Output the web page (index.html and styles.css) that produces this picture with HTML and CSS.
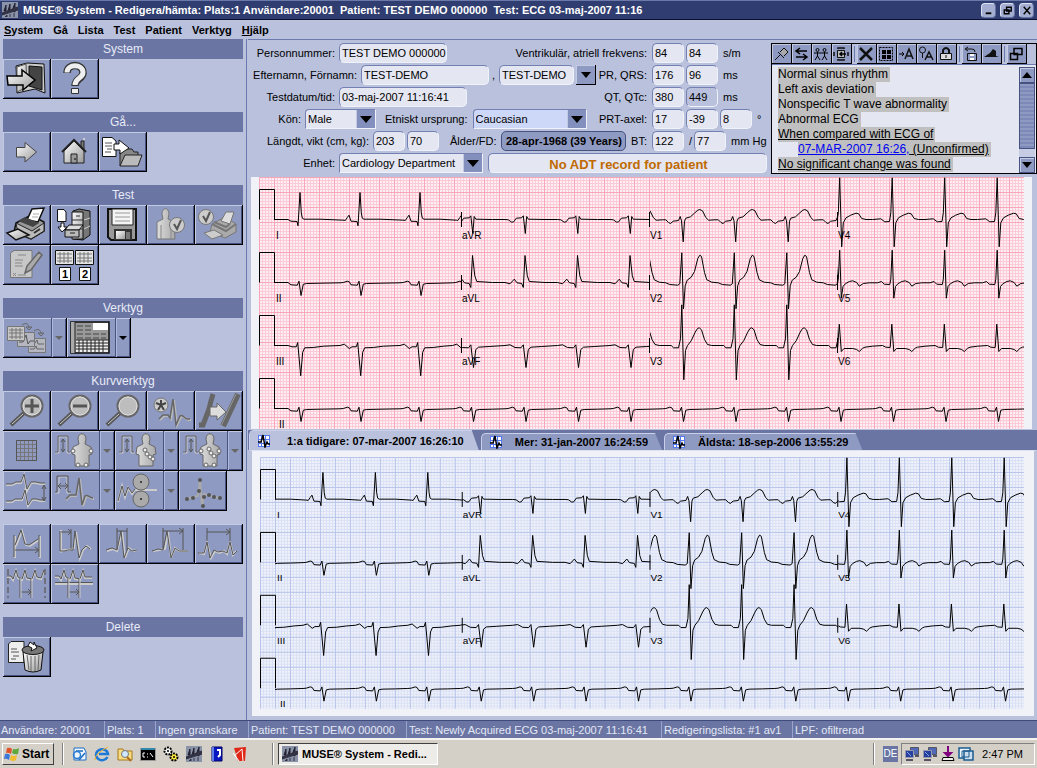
FILE: index.html
```html
<!DOCTYPE html>
<html lang="sv">
<head>
    <meta charset="UTF-8">
    <meta name="viewport" content="width=device-width, initial-scale=1.0">
    <title>MUSE® System</title>
    <link rel="stylesheet" href="styles.css">
</head>
<body>

<!-- Icon set -->
<svg class="defs" aria-hidden="true">
    <defs>
        <linearGradient id="metal" x1="0" y1="0" x2="1" y2="1">
            <stop offset="0" stop-color="#fff"/><stop offset="1" stop-color="#999"/>
        </linearGradient>
        <linearGradient id="dim" x1="0" y1="0" x2="1" y2="0">
            <stop offset="0" stop-color="#ddd"/><stop offset="1" stop-color="#aaa"/>
        </linearGradient>
        <pattern id="minor-pink" width="3" height="3" patternUnits="userSpaceOnUse"><path d="M.5 0V3M0 .5H3" stroke="#fccbd7" fill="none"/></pattern>
        <pattern id="major-pink" width="15" height="15" patternUnits="userSpaceOnUse"><path d="M.5 0V15M0 .5H15" stroke="#faa6ba" fill="none"/></pattern>
        <pattern id="minor-blue" width="3" height="3" patternUnits="userSpaceOnUse"><path d="M.5 0V3M0 .5H3" stroke="#dbe1f4" fill="none"/></pattern>
        <pattern id="major-blue" width="15" height="15" patternUnits="userSpaceOnUse"><path d="M.5 0V15M0 .5H15" stroke="#b8c5ea" fill="none"/></pattern>
    </defs>

    <symbol id="i-exit" viewBox="0 0 48 40">
        <path d="M13 7 24 4 41 5 42 34 32 30 14 34z" fill="#ccc" stroke="#111"/>
        <path d="M26 7 39 8V31L26 27z" fill="#444" stroke="#111"/>
        <path d="M14 8 23 5 24 28 14 33z" fill="url(#metal)" stroke="#555"/>
        <path d="M4 17H19V11L32 21 20 31V26H5z" fill="url(#metal)" stroke="#000" stroke-width="1.5"/>
    </symbol>
    <symbol id="i-help" viewBox="0 0 48 40">
        <path d="M16 14c0-10 16-10 16 0 0 6-8 5-8 13" fill="none" stroke="#333" stroke-width="7.500"/>
        <path d="M16 13.500c0-9 16-9 16 0 0 6-8 5-8 12.500" fill="none" stroke="#eee" stroke-width="5"/>
        <path d="M20.500 29.500h7v5h-7z" fill="#eee" stroke="#333"/>
    </symbol>
    <symbol id="i-next" viewBox="0 0 48 40">
        <path d="M13.500 15.500H22V10.500L33.500 20 22 30V25H13.500z" fill="url(#metal)" stroke="#444"/>
    </symbol>
    <symbol id="i-home" viewBox="0 0 48 40">
        <path d="M30 16V9h3v9" fill="#777" stroke="#222"/>
        <path d="M13 19 23 9 33 19V31H13z" fill="url(#metal)" stroke="#222"/>
        <path d="M11 20 23 8 35 20" fill="none" stroke="#222" stroke-width="2"/>
        <path d="M20 22h6v9h-6z" fill="#999" stroke="#222"/><path d="M24 26v2" stroke="#000"/>
        <path d="M32 6h2v2h-2z" fill="#ccc"/>
    </symbol>
    <symbol id="i-folder" viewBox="0 0 48 40">
        <path d="M3.500 5.500H13L17 9V24.500H3.500z" fill="#fff" stroke="#111"/>
        <path d="M6 11h7M6 14h7M8 17h5M6 20h6" stroke="#555"/>
        <path d="M21 34V20l4-3h8l2 3h4v5" fill="#888" stroke="#222"/>
        <path d="M21 34 26 23H43L39 34z" fill="#bbb" stroke="#222"/>
        <path d="M15 12h5V8l10 8-9 6v-4h-6z" fill="#fff" stroke="#111"/>
    </symbol>
    <symbol id="i-printer" viewBox="0 0 48 40">
        <path d="M13 18 28 10 41 17V26L28 34 11 27z" fill="#999" stroke="#111" stroke-width="1.500"/>
        <path d="M24 15 29 4 41 3 35 17z" fill="#fff" stroke="#111" stroke-width="1.500"/>
        <path d="M29 12h6M30 9h6" stroke="#aaa"/>
        <path d="M13 18 29 26 41 18V26L28 34 15 28z" fill="#bbb" stroke="#222"/>
        <path d="M15 16 30 22 36 18 22 12z" fill="#444"/>
        <path d="M4 28 15 24 26 30 13 35z" fill="url(#metal)" stroke="#111" stroke-width="1.500"/>
        <path d="M31 28l6-4" stroke="#333" stroke-width="2"/>
    </symbol>
    <symbol id="i-cabinet" viewBox="0 0 48 40">
        <path d="M6.500 4.500H13L15 7V16.500H6.500z" fill="#fff" stroke="#111"/>
        <path d="M10 18h3v4h3l-5 5-4-5h3z" fill="#fff" stroke="#111"/>
        <path d="M22 6 28 4 39 6V30L32 35 22 34z" fill="#777" stroke="#111"/>
        <path d="M21 7H32V34H21z" fill="url(#metal)" stroke="#111"/>
        <path d="M21 15H32M25 11h4M21 24H32" stroke="#333"/>
        <path d="M14 25 18 20H32L28 25z" fill="#ddd" stroke="#111"/>
        <path d="M14 25H28V32H14z" fill="#bbb" stroke="#111"/><path d="M19 28h5" stroke="#222"/>
        <path d="M33 15l6-2M33 24l6-3" stroke="#ccc"/>
    </symbol>
    <symbol id="i-save" viewBox="0 0 48 40">
        <path d="M9 4H37V35H12L9 32z" fill="#999" stroke="#111" stroke-width="2"/>
        <path d="M13 4H34V20H13z" fill="#f4f4f4" stroke="#222"/>
        <path d="M16 8H31M16 12H31M16 16H31" stroke="#999"/>
        <path d="M15 24H33V35H15z" fill="#333"/><path d="M17 26H26V34H17z" fill="url(#metal)"/><path d="M27 27h4v7h-4z" fill="#777"/>
    </symbol>
    <symbol id="i-person-ok" viewBox="0 0 48 40">
        <path d="M15 9c0-7 7-7 7 0l-1 5 6 3 1 17H10V17l6-3z" fill="url(#dim)" stroke="#777"/>
        <path d="M14 20v14M24 22v12" stroke="#888"/>
        <circle cx="30" cy="20" r="7.500" fill="#ccc" stroke="#777"/><path d="M27 19l3 5 4-9" fill="none" stroke="#555" stroke-width="2"/>
    </symbol>
    <symbol id="i-printer-ok" viewBox="0 0 48 40">
        <path d="M17 19 30 12 41 19V27L30 33 15 27z" fill="#aaa" stroke="#777"/>
        <path d="M26 16 31 7 39 7 35 19z" fill="#ddd" stroke="#777"/>
        <path d="M17 19 31 26 41 19M19 17l12 5 4-3" stroke="#777" fill="none" stroke-width="2"/>
        <path d="M9 28 19 25 28 30 17 34z" fill="#ccc" stroke="#777"/>
        <circle cx="11" cy="12" r="7.500" fill="#ccc" stroke="#777"/><path d="M8 11l3 5 4-9" fill="none" stroke="#555" stroke-width="2"/>
    </symbol>
    <symbol id="i-sign" viewBox="0 0 48 40">
        <path d="M7.500 8 11 5.500H29V32.500H7.500z" fill="#c8c8c8" stroke="#777"/>
        <path d="M15 10h8M12 15h8M12 18h7M12 21h8M10 28l3 3M13 28l-3 3M15 30h8" stroke="#888"/>
        <path d="M22 28 24 21 36 7 39 10 28 25z" fill="#aaa" stroke="#666" stroke-width="1.500"/>
    </symbol>
    <symbol id="i-cascade" viewBox="0 0 48 40">
        <path d="M25.500 20.500h17v14h-17z" fill="#b4b6c0" stroke="#777"/><path d="M27 25h5l2-3 1 4h6M27 31h4l2-3 1 3h7" stroke="#666" fill="none"/>
        <path d="M14.500 14.500h17v14h-17z" fill="#b4b6c0" stroke="#777"/><path d="M16 24h4l3-7 2 9 2-3h4" stroke="#555" fill="none"/>
        <path d="M4.500 8.500h17v14h-17z" fill="#c6c6c6" stroke="#777"/>
        <path d="M6 12h14M6 15h14M6 19h14M9 10v11M13 10v11M17 10v11" stroke="#777"/>
        <path d="M19 7c4-3 7-1 7 3M23 9h6l-3 3zM31 13c4-3 7-1 7 3M35 15h6l-3 3z" stroke="#666" fill="none"/>
    </symbol>
    <symbol id="i-layout" viewBox="0 0 48 40">
        <path d="M4 4H42V35H4z" fill="#999" stroke="#111" stroke-width="1.500"/>
        <path d="M4 4H8V35H4z" fill="#aaa"/><path d="M8 4V35" stroke="#222"/>
        <path d="M10 8h14M10 12h14M10 16h29M10 20h29" stroke="#444" stroke-dasharray="6 2"/>
        <path d="M26 5H41V12H26z" fill="#fff"/>
        <path d="M9 22H41V34H9z" fill="#eee"/>
        <path d="M9 22H41M9 25H41M9 28H41M9 31H41M12 22V34M16 22V34M20 22V34M24 22V34M28 22V34M32 22V34M36 22V34" stroke="#222"/>
    </symbol>
    <symbol id="i-lens" viewBox="0 0 48 40">
        <path d="M8 34 21 22" stroke="#555" stroke-width="4"/><path d="M9 33 20 23" stroke="#ccc"/>
        <circle cx="29" cy="15" r="10.500" fill="#bdbdbd" stroke="#666" stroke-width="2"/>
        <circle cx="29" cy="15" r="9" fill="none" stroke="#ddd"/>
    </symbol>
    <symbol id="i-zoom-in" viewBox="0 0 48 40"><use href="#i-lens"/><path d="M22 15H36M29 8V22" stroke="#555" stroke-width="3"/></symbol>
    <symbol id="i-zoom-out" viewBox="0 0 48 40"><use href="#i-lens"/><path d="M22 15H36" stroke="#555" stroke-width="3"/></symbol>
    <symbol id="i-star-wave" viewBox="0 0 48 40">
        <path d="M13 29l4-4h5l2 3 3-19 3 25 4-8c3-2 5 3 7 3h3" fill="none" stroke="#bbb" stroke-width="2"/>
        <path d="M12 28l4-4h5l2 3 3-19 3 26 4-9c3-2 5 3 7 3h3" fill="none" stroke="#666" stroke-width="1.500"/>
        <circle cx="14" cy="14" r="7" fill="#ccc" stroke="#777"/><path d="M14 9v5M9 12l5 2M19 12l-5 2M11 19l3-5M17 19l-3-5" stroke="#444" stroke-width="2"/>
    </symbol>
    <symbol id="i-shift" viewBox="0 0 48 40">
        <path d="M4 34h4l3-8 3-8 2-8 2-7" fill="none" stroke="#666" stroke-width="5"/>
        <path d="M28 35 43 3" stroke="#666" stroke-width="6"/><path d="M26 35 41 3" stroke="#999"/>
        <path d="M15 16h7v-4l9 9-9 8v-4h-7z" fill="#ddd" stroke="#666"/>
    </symbol>
    <symbol id="i-grid" viewBox="0 0 48 40">
        <path d="M13.500 9.500h20v20h-20zM17.500 9v21M21.500 9v21M25.500 9v21M29.500 9v21M13 13.500h21M13 17.500h21M13 21.500h21M13 25.500h21" fill="none" stroke="#777"/>
        <path d="M13.500 9.500h20v20h-20z" fill="none" stroke="#555"/>
    </symbol>
    <symbol id="i-torso" viewBox="0 0 48 40">
        <path d="M4 22h4V6h8v16h4" fill="none" stroke="#ccc"/><path d="M4 21h3V5h10v16h2" fill="none" stroke="#666"/>
        <path d="M12 9v11M10 11l2-3 2 3M10 18l2 3 2-3" fill="none" stroke="#555"/>
        <path d="M27 8c0-7 8-7 8 0l-1 5 6 3 1 7-3 1v11H24V24l-3-1 1-7 6-3z" fill="url(#dim)" stroke="#666"/>
    </symbol>
    <symbol id="i-limb" viewBox="0 0 48 40">
        <use href="#i-torso"/>
        <g fill="#eee" stroke="#666"><circle cx="22" cy="20" r="2"/><circle cx="40" cy="20" r="2"/><circle cx="27" cy="34" r="2"/><circle cx="35" cy="34" r="2"/></g>
    </symbol>
    <symbol id="i-chest" viewBox="0 0 48 40">
        <use href="#i-torso"/>
        <g fill="#eee" stroke="#666"><circle cx="30" cy="19" r="2"/><circle cx="32" cy="23" r="2"/><circle cx="35" cy="26" r="2"/><circle cx="38" cy="28" r="2"/></g>
    </symbol>
    <symbol id="i-all-leads" viewBox="0 0 48 40">
        <use href="#i-limb"/>
        <g fill="#eee" stroke="#666"><circle cx="30" cy="18" r="2"/><circle cx="32" cy="22" r="2"/><circle cx="35" cy="25" r="2"/></g>
    </symbol>
    <symbol id="i-two-waves" viewBox="0 0 48 40">
        <g fill="none"><path d="M3 14h6l4-2h5l3-8 3 16 4-8h5l4 1h5M3 31h6l3-2h7l3-9 3 15 4-6h5l3 1h5" stroke="#ccc" stroke-width="2"/>
        <path d="M3 13h6l4-2h5l3-8 3 15 4-7h5l4 1h5M3 30h6l3-2h7l3-9 3 15 4-6h5l3 1h5M41 15v14M39 18l2-4 2 4M39 26l2 4 2-4" stroke="#555"/></g>
    </symbol>
    <symbol id="i-width" viewBox="0 0 48 40">
        <g fill="none"><path d="M4 22h4V6h8v16h4" stroke="#ccc"/><path d="M4 21h2V5h11v16h3M7 15h10M10 12l-3 3 3 3M14 12l3 3-3 3" stroke="#555"/>
        <path d="M15 29l4-4h6l4-17 3 27 3-9c3-2 4 2 8 2" stroke="#bbb" stroke-width="2"/><path d="M15 28l4-4h6l3-17 3 27 3-9c3-2 4 2 8 2" stroke="#666" stroke-width="1.500"/></g>
    </symbol>
    <symbol id="i-rollers" viewBox="0 0 48 40">
        <path d="M3 31 7 15l3 11 3-9 4 6 3-4H42" fill="none" stroke="#ccc" stroke-width="2"/><path d="M3 30 7 15l3 10 3-9 4 6 3-4" fill="none" stroke="#555"/>
        <circle cx="26" cy="11" r="8" fill="#aaa" stroke="#666"/><circle cx="26" cy="28" r="8" fill="#aaa" stroke="#666"/>
        <path d="M26 10v2M26 27v2" stroke="#444" stroke-width="2"/>
    </symbol>
    <symbol id="i-points" viewBox="0 0 48 40">
        <path d="M7 28l7-2 5-1 2-16 2 26 2-12 7 2 8 2" fill="none" stroke="#aaa" stroke-width="2"/>
        <g fill="#555"><circle cx="8" cy="28" r="2"/><circle cx="14" cy="27" r="2"/><circle cx="20" cy="20" r="2"/><circle cx="21" cy="9" r="2"/><circle cx="24" cy="35" r="2"/><circle cx="25" cy="26" r="2"/><circle cx="30" cy="24" r="2"/><circle cx="35" cy="26" r="2"/><circle cx="41" cy="27" r="2"/></g>
    </symbol>
    <symbol id="i-m1" viewBox="0 0 48 40">
        <g fill="none"><path d="M12 12v22M37 12v22M13 22l6-15 4 14 4 1 9-6" stroke="#ccc" stroke-width="2"/><path d="M11 11v22M36 11v22M12 21l6-15 4 14 4 1 9-6M12 26h23M32 23l4 3-4 3" stroke="#555"/></g>
    </symbol>
    <symbol id="i-m2" viewBox="0 0 48 40">
        <g fill="none"><path d="M10 27V6M9 28l4-2h5l5-2 2-16 4 26 3-8 4-4 4 3" stroke="#ccc" stroke-width="2"/><path d="M9 27h4l4-1h5l2-19 4 27 3-8 4-4 4 3M9 27V7M20 25V5M10 8h10M17 5l3 3-3 3" stroke="#555"/></g>
    </symbol>
    <symbol id="i-m3" viewBox="0 0 48 40">
        <g fill="none"><path d="M8 27l6-2 4 2 5-19 3 26 4-10 4 3 4-1" stroke="#ccc" stroke-width="2"/><path d="M7 26l6-2 5 2 4-19 3 27 4-10 4 3 5-1M18 25V4M28 26V4M18 7h10" stroke="#555"/></g>
    </symbol>
    <symbol id="i-m4" viewBox="0 0 48 40">
        <g fill="none"><path d="M6 27l6-1 6-1 3-17 3 26 4-10 4 3h9" stroke="#ccc" stroke-width="2"/><path d="M5 27l6-2 5 1 4-19 4 27 4-10 4 3h9M16 25V4M36 26V4M16 7h20M32 4l4 3-4 3" stroke="#555"/></g>
    </symbol>
    <symbol id="i-m5" viewBox="0 0 48 40">
        <g fill="none"><path d="M4 29l5 1 3-11 4 15 4-7 4 2 5-2 3 3 3-12 3 13 3-4" stroke="#ccc" stroke-width="2"/><path d="M3 29h6l3-11 3 16 4-8 4 2 5-1 4 2 3-11 3 13 4-4M12 17V4M35 17V4M12 8h23M31 5l4 3-4 3" stroke="#555"/></g>
    </symbol>
    <symbol id="i-m6" viewBox="0 0 48 40">
        <g fill="none"><path d="M4 13h4l2 3 3-9 2 7 4 2 3-9 2 8 5 1 3-9 2 7 4 1 3-8" stroke="#ccc" stroke-width="2"/><path d="M5 5v29M42 5v29" stroke="#666" stroke-width="1.500" stroke-dasharray="6 3"/><path d="M4 12h4l2 3 3-9 2 7 4 2 3-9 2 8 5 1 3-9 2 7 4 1 3-8M17 14v20M28 14v20M18 28h10M25 25l3 3-3 3" stroke="#555"/><path d="M18 14v20M29 14v20" stroke="#ccc"/></g>
    </symbol>
    <symbol id="i-m7" viewBox="0 0 48 40">
        <g fill="none"><path d="M4 13h4l2 3 3-9 2 7 4 2 3-9 2 8 5 1 3-9 2 7h7M4 20h38" stroke="#ccc" stroke-width="2"/><path d="M4 12h4l2 3 3-9 2 7 4 2 3-9 2 8 5 1 3-9 2 7h7M4 18.500h38M17 14v20M28 14v20M18 28h10M25 25l3 3-3 3" stroke="#555"/><path d="M18 14v20M29 14v20" stroke="#ccc"/></g>
    </symbol>
    <symbol id="i-trash" viewBox="0 0 48 40">
        <path d="M5.500 7 8 4.500H21V25.500H5.500z" fill="#eee" stroke="#222"/><path d="M8 12h6M8 15h8M10 19h6M8 22h5" stroke="#555"/>
        <path d="M20 15 22 33q8 4 16 0L40 15z" fill="url(#metal)" stroke="#111"/><path d="M24 18l2 15M28 19v15M32 19v15M36 18l-1 15" stroke="#666"/>
        <ellipse cx="30" cy="13" rx="11" ry="4.500" fill="#777" stroke="#111"/>
        <path d="M27 5l4 3 0-3 3 6-6 3 1-3-4-2z" fill="#fff" stroke="#111"/>
    </symbol>

    <symbol id="s-pin" viewBox="0 0 18 18"><path d="M3 15l5-5M6 7l6 6M8 7l4-4 4 4-4 4" fill="#aaa" stroke="#111"/></symbol>
    <symbol id="s-swap" viewBox="0 0 18 18"><path d="M15 6H5M8 3 4 6l4 3M4 12h10M11 9l4 3-4 3" fill="none" stroke="#000" stroke-width="1.500"/></symbol>
    <symbol id="s-people" viewBox="0 0 18 18"><g fill="none" stroke="#000"><circle cx="5.500" cy="5" r="1.500"/><circle cx="12.500" cy="5" r="1.500"/><path d="M2 8h14M5.500 7v4M12.500 7v4M3 15l2.500-4L8 15M10 15l2.500-4 2.500 4"/></g></symbol>
    <symbol id="s-focus" viewBox="0 0 18 18"><path d="M6 4V3h6v1M6 14v1h6v-1M2 7v4M16 7v4" stroke="#111" fill="none" stroke-width="1.500"/><path d="M5.500 5.500h7v7h-7z" fill="#bbb" stroke="#111"/><path d="M14 9H8M10 7 8 9l2 2" fill="none" stroke="#000" stroke-width="1.500"/></symbol>
    <symbol id="s-x" viewBox="0 0 18 18"><path d="M3 3 15 15M15 3 3 15" stroke="#111" stroke-width="2.500"/></symbol>
    <symbol id="s-select" viewBox="0 0 18 18"><path d="M2.500 2.500h13v13h-13z" fill="none" stroke="#000" stroke-dasharray="2 1"/><path d="M5 5h4v4H5zM10 5h4v4h-4zM5 10h4v4H5zM10 10h4v4h-4z"/></symbol>
    <symbol id="s-insert" viewBox="0 0 18 18"><path d="M2 9h5M5 7l2 2-2 2" fill="none" stroke="#000"/><path d="M8 14l4-10 4 10M10 11h5" fill="none" stroke="#111" stroke-width="1.500"/></symbol>
    <symbol id="s-find" viewBox="0 0 18 18"><circle cx="5.500" cy="5" r="3" fill="none" stroke="#111"/><path d="M5.500 8v5" stroke="#111"/><path d="M8 15l4-8 4 8M10 12h5" fill="none" stroke="#111" stroke-width="1.500"/></symbol>
    <symbol id="s-lock" viewBox="0 0 18 18"><path d="M6 8V5q3-4 6 0v3" fill="none" stroke="#111" stroke-width="2"/><path d="M3.500 8.500h11v6h-11z" fill="#ddd" stroke="#111"/><path d="M9 10v3" stroke="#111"/></symbol>
    <symbol id="s-store" viewBox="0 0 18 18"><path d="M4 4h6q3 0 3 3M6 2 3 4l3 2M5.500 8.500h9v7h-9z" fill="none" stroke="#111"/><path d="M8 9h4v2H8zM8 13h4v2H8z" fill="#fff"/></symbol>
    <symbol id="s-hat" viewBox="0 0 18 18"><path d="M2 12 8 8l3-4 3 2v5l3 1z" fill="#111"/></symbol>
    <symbol id="s-windows" viewBox="0 0 18 18"><path d="M7 3.500h8v6H7zM3.500 8.500h7v6h-7z" fill="#8f9ac2" stroke="#000" stroke-width="1.500"/></symbol>
    <symbol id="s-ecg" viewBox="0 0 14 14"><path d="M1 1h12v12H1z" fill="#fff"/><path d="M1.500 1v12M4.500 1v12M8.500 1v12M12.500 1v12M1 1.500h12M1 5.500h12M1 9.500h12M1 12.500h12" stroke="#5577f0"/><path d="M1 8h3l2-7 2 12 2-5 1 2h2" fill="none" stroke="#000" stroke-width="1.500"/></symbol>
    <symbol id="s-app" viewBox="0 0 16 16"><path d="M0 0h16v16H0z" fill="#8b93a8"/><path d="M2 9 4 3v6zM6 9l2-7v8zM10 9l3-8v9z" fill="#223" stroke="#223"/><path d="M0 11 16 5v3L0 13zM3 15l2-2v2M8 15v-3M12 15v-4" fill="#334" stroke="#334"/></symbol>
    <symbol id="s-flag" viewBox="0 0 16 16"><path d="M3 2q3-1 5 1L7 8Q4 6 2 7z" fill="#e0522c"/><path d="M9 3q3 1 6-1l-1 6q-3 1-6-1z" fill="#5ca83c"/><path d="M1 8q3-1 5 1l-1 5q-3-2-5-1z" fill="#3c78d8"/><path d="M7 9q3 2 6 0l-1 5q-3 2-6 0z" fill="#f2bc2c"/></symbol>
    <symbol id="s-outlook" viewBox="0 0 16 16"><path d="M3 2h10l2 4v8H3z" fill="#eef6ff" stroke="#1f6cc0"/><path d="M5 5h7M8 14l6-7" stroke="#1f6cc0" stroke-width="1.500"/><circle cx="6" cy="9" r="3.500" fill="none" stroke="#2a7ed0" stroke-width="1.500"/></symbol>
    <symbol id="s-ie" viewBox="0 0 16 16"><path d="M13.500 11A6 5.500 0 1 1 14 8H5" fill="none" stroke="#1e78d8" stroke-width="2.500"/><path d="M1 14Q0 8 14 1" fill="none" stroke="#e8b22c"/></symbol>
    <symbol id="s-search" viewBox="0 0 16 16"><path d="M1 3h5l1 2h8v9H1z" fill="#f8dc80" stroke="#a87818"/><circle cx="8" cy="8" r="3.500" fill="#cfe8ff" stroke="#777"/><path d="M10 11l4 4" stroke="#b06a20" stroke-width="2"/></symbol>
    <symbol id="s-cmd" viewBox="0 0 16 16"><path d="M.5 2.500h15v12H.5z" fill="#000" stroke="#999"/><path d="M1 3h14" stroke="#38a" stroke-width="2"/><path d="M5 7H3v4h2M7 8h1M7 11h1M10 7l3 4" fill="none" stroke="#fff"/></symbol>
    <symbol id="s-gears" viewBox="0 0 16 16"><circle cx="5" cy="5" r="3.500" fill="#fff" stroke="#000" stroke-width="2" stroke-dasharray="2 1"/><circle cx="11" cy="11" r="3.500" fill="#ffee40" stroke="#000" stroke-width="2" stroke-dasharray="2 1"/><circle cx="5" cy="5" r="1"/><circle cx="11" cy="11" r="1"/></symbol>
    <symbol id="s-book" viewBox="0 0 16 16"><path d="M3 1h10v14H3z" fill="#0818c0" stroke="#000060"/><path d="M3 1h2v14H3z" fill="#6080e8"/><path d="M8 4h3v5l-2 2" fill="none" stroke="#fff" stroke-width="2"/></symbol>
    <symbol id="s-pdf" viewBox="0 0 16 16"><path d="M2 2 14 1 13 15H6z" fill="#e02818"/><path d="M2 10l8-7 1 12M1 7l6 8" fill="none" stroke="#fff"/></symbol>
    <symbol id="s-net" viewBox="0 0 16 16"><path d="M6.500 1.500h8v7h-8z" fill="#5068b8" stroke="#556"/><path d="M1.500 4.500h8v7h-8z" fill="#2440a0" stroke="#99a"/><path d="M3 6l4 4" stroke="#88a0e0"/><path d="M2 14h7M11 10h4" stroke="#556" stroke-width="2"/></symbol>
    <symbol id="s-eject" viewBox="0 0 16 16"><path d="M8 0v8M5 7l3 3 3-3z" fill="#800080" stroke="#800080" stroke-width="2"/><path d="M3 11.500h10l1 3H2z" fill="#eee" stroke="#000"/></symbol>
    <symbol id="s-vm" viewBox="0 0 16 16"><path d="M1 2h11v10H1z" fill="#eef4fa" stroke="#1b5c90" stroke-width="1.500"/><path d="M6 5h9v9H6z" fill="#cde" stroke="#1b5c90" stroke-width="1.500"/><path d="M4 5h7v6H4z" fill="none" stroke="#1b5c90"/></symbol>
</svg>

<div class="app">
    <header class="title-bar">
        <svg class="app-icon"><use href="#s-app"/></svg>
        <h1>MUSE® System - Redigera/hämta: Plats:1 Användare:20001&nbsp; Patient: TEST DEMO 000000&nbsp; Test: ECG 03-maj-2007 11:16</h1>
        <div class="window-buttons">
            <button type="button" aria-label="Minimize"><svg viewBox="0 0 14 14"><path d="M4 10h6" stroke="#000" stroke-width="2"/></svg></button>
            <button type="button" aria-label="Restore"><svg viewBox="0 0 14 14"><path d="M6 3.500h5v4H6zM3.500 6.500h5v4h-5z" fill="#a4aed0" stroke="#000" stroke-width="1.500"/></svg></button>
            <button type="button" aria-label="Close"><svg viewBox="0 0 14 14"><path d="M4 3l7 8M11 3l-7 8" stroke="#000" stroke-width="1.500"/></svg></button>
        </div>
    </header>

    <nav class="menu">
        <button type="button"><u>S</u>ystem</button>
        <button type="button">Gå</button>
        <button type="button">Lista</button>
        <button type="button">Test</button>
        <button type="button">Patient</button>
        <button type="button">Verktyg</button>
        <button type="button"><u>H</u>jälp</button>
    </nav>

    <main>
        <!-- Tool palette -->
        <aside class="sidebar">
            <section>
                <h2>System</h2>
                <div class="tools">
                    <button class="tool" type="button" aria-label="Exit"><svg><use href="#i-exit"/></svg></button>
                    <button class="tool" type="button" aria-label="Help"><svg><use href="#i-help"/></svg></button>
                </div>
            </section>
            <section>
                <h2>Gå...</h2>
                <div class="tools">
                    <button class="tool" type="button" aria-label="Next"><svg><use href="#i-next"/></svg></button>
                    <button class="tool" type="button" aria-label="Home"><svg><use href="#i-home"/></svg></button>
                    <button class="tool" type="button" aria-label="Open list"><svg><use href="#i-folder"/></svg></button>
                </div>
            </section>
            <section>
                <h2>Test</h2>
                <div class="tools">
                    <button class="tool" type="button" aria-label="Print"><svg><use href="#i-printer"/></svg></button>
                    <button class="tool" type="button" aria-label="Archive"><svg><use href="#i-cabinet"/></svg></button>
                    <button class="tool" type="button" aria-label="Save"><svg><use href="#i-save"/></svg></button>
                    <button class="tool" type="button" aria-label="Confirm patient" disabled><svg><use href="#i-person-ok"/></svg></button>
                    <button class="tool" type="button" aria-label="Confirm and print" disabled><svg><use href="#i-printer-ok"/></svg></button>
                    <button class="tool" type="button" aria-label="Sign" disabled><svg><use href="#i-sign"/></svg></button>
                    <button class="tool" type="button" aria-label="Compare">
                        <svg viewBox="0 0 48 40">
                            <path d="M4.500 5.500h18v14h-18zM24.500 5.500h18v14h-18z" fill="#e4e4e4" stroke="#111"/>
                            <path d="M6 9h15M6 13h15M6 16h15M9 7v11M13 7v11M17 7v11M26 9h15M26 13h15M26 16h15M29 7v11M33 7v11M37 7v11" stroke="#777"/>
                            <path d="M8.500 22.500h11v13h-11zM28.500 22.500h11v13h-11z" fill="#fff" stroke="#111"/>
                            <text x="11" y="33" class="icon-num">1</text>
                            <text x="31" y="33" class="icon-num">2</text>
                        </svg>
                    </button>
                </div>
            </section>
            <section>
                <h2>Verktyg</h2>
                <div class="tools">
                    <div class="split">
                        <button type="button" aria-label="Cascade" disabled><svg><use href="#i-cascade"/></svg></button>
                        <button class="more" type="button" aria-label="More" disabled></button>
                    </div>
                    <div class="split">
                        <button type="button" aria-label="Layout"><svg><use href="#i-layout"/></svg></button>
                        <button class="more" type="button" aria-label="More"></button>
                    </div>
                </div>
            </section>
            <section>
                <h2>Kurvverktyg</h2>
                <div class="tools">
                    <button class="tool" type="button" aria-label="Zoom in" disabled><svg><use href="#i-zoom-in"/></svg></button>
                    <button class="tool" type="button" aria-label="Zoom out" disabled><svg><use href="#i-zoom-out"/></svg></button>
                    <button class="tool" type="button" aria-label="Magnifier" disabled><svg><use href="#i-lens"/></svg></button>
                    <button class="tool" type="button" aria-label="Mark beat" disabled><svg><use href="#i-star-wave"/></svg></button>
                    <button class="tool" type="button" aria-label="Shift" disabled><svg><use href="#i-shift"/></svg></button>
                    <button class="tool" type="button" aria-label="Grid" disabled><svg><use href="#i-grid"/></svg></button>
                    <div class="split">
                        <button type="button" aria-label="Limb gain" disabled><svg><use href="#i-limb"/></svg></button>
                        <button class="more" type="button" aria-label="More" disabled></button>
                    </div>
                    <div class="split">
                        <button type="button" aria-label="Chest gain" disabled><svg><use href="#i-chest"/></svg></button>
                        <button class="more" type="button" aria-label="More" disabled></button>
                    </div>
                    <div class="split">
                        <button type="button" aria-label="All gain" disabled><svg><use href="#i-all-leads"/></svg></button>
                        <button class="more" type="button" aria-label="More" disabled></button>
                    </div>
                    <button class="tool" type="button" aria-label="Spacing" disabled><svg><use href="#i-two-waves"/></svg></button>
                    <div class="split">
                        <button type="button" aria-label="Speed" disabled><svg><use href="#i-width"/></svg></button>
                        <button class="more" type="button" aria-label="More" disabled></button>
                    </div>
                    <div class="split">
                        <button type="button" aria-label="Filter" disabled><svg><use href="#i-rollers"/></svg></button>
                        <button class="more" type="button" aria-label="More" disabled></button>
                    </div>
                    <button class="tool" type="button" aria-label="Points" disabled><svg><use href="#i-points"/></svg></button>
                </div>
            </section>
            <section>
                <div class="tools">
                    <button class="tool" type="button" aria-label="Caliper" disabled><svg><use href="#i-m1"/></svg></button>
                    <button class="tool" type="button" aria-label="PR interval" disabled><svg><use href="#i-m2"/></svg></button>
                    <button class="tool" type="button" aria-label="QRS duration" disabled><svg><use href="#i-m3"/></svg></button>
                    <button class="tool" type="button" aria-label="QT interval" disabled><svg><use href="#i-m4"/></svg></button>
                    <button class="tool" type="button" aria-label="RR interval" disabled><svg><use href="#i-m5"/></svg></button>
                    <button class="tool" type="button" aria-label="March out" disabled><svg><use href="#i-m6"/></svg></button>
                    <button class="tool" type="button" aria-label="Baseline" disabled><svg><use href="#i-m7"/></svg></button>
                </div>
            </section>
            <section>
                <h2>Delete</h2>
                <div class="tools">
                    <button class="tool" type="button" aria-label="Delete"><svg><use href="#i-trash"/></svg></button>
                </div>
            </section>
        </aside>

        <div class="content">
            <div class="record">
                <!-- Patient fields -->
                <form class="fields">
                    <div class="row">
                        <label class="lead" for="pid">Personnummer:</label>
                        <input class="w-id" id="pid" value="TEST DEMO 000000">
                        <label class="vital-label" for="vrate">Ventrikulär, atriell frekvens:</label>
                        <div class="vitals"><input id="vrate" value="84"><input aria-label="Atriell frekvens" value="84"><span>s/m</span></div>
                    </div>
                    <div class="row">
                        <label class="lead lead-name" for="last">Efternamn, Förnamn:</label>
                        <input class="w-long" id="last" value="TEST-DEMO">
                        <span class="comma">,</span>
                        <input class="w-first" aria-label="Förnamn" value="TEST-DEMO">
                        <button class="drop" type="button" aria-label="Välj namn"></button>
                        <label class="vital-label" for="pr">PR, QRS:</label>
                        <div class="vitals"><input id="pr" value="176"><input aria-label="QRS" value="96"><span>ms</span></div>
                    </div>
                    <div class="row">
                        <label class="lead" for="date">Testdatum/tid:</label>
                        <input class="w-long" id="date" value="03-maj-2007 11:16:41">
                        <label class="vital-label" for="qt">QT, QTc:</label>
                        <div class="vitals"><input id="qt" value="380"><input class="computed" aria-label="QTc" value="449" readonly><span>ms</span></div>
                    </div>
                    <div class="row">
                        <label class="lead lead-sex" for="sex">Kön:</label>
                        <span class="select w-sex"><select id="sex"><option>Male</option></select></span>
                        <label class="inner" for="race">Etniskt ursprung:</label>
                        <span class="select w-race"><select id="race"><option>Caucasian</option></select></span>
                        <label class="vital-label" for="axis">PRT-axel:</label>
                        <div class="vitals"><input id="axis" value="17"><input aria-label="R-axel" value="-39"><input aria-label="T-axel" value="8"><span>°</span></div>
                    </div>
                    <div class="row">
                        <label class="lead lead-size" for="height">Längdt, vikt (cm, kg):</label>
                        <input class="w-num" id="height" value="203">
                        <input class="w-num" aria-label="Vikt" value="70">
                        <label class="inner" for="age">Ålder/FD:</label>
                        <button class="age" id="age" type="button">28-apr-1968 (39 Years)</button>
                        <label class="vital-label" for="bp">BT:</label>
                        <div class="vitals"><input id="bp" value="122"><span>/</span><input aria-label="Diastoliskt" value="77"><span>mm Hg</span></div>
                    </div>
                    <div class="row">
                        <label class="lead" for="unit">Enhet:</label>
                        <span class="select w-unit"><select id="unit"><option>Cardiology Department</option></select></span>
                        <div class="adt">No ADT record for patient</div>
                    </div>
                </form>

                <!-- Interpretation -->
                <div class="diagnosis">
                    <div class="diag-tools">
                        <button type="button" aria-label="Pin"><svg><use href="#s-pin"/></svg></button>
                        <button type="button" aria-label="Swap"><svg><use href="#s-swap"/></svg></button>
                        <button type="button" aria-label="People"><svg><use href="#s-people"/></svg></button>
                        <button type="button" aria-label="Focus"><svg><use href="#s-focus"/></svg></button>
                        <i></i>
                        <button type="button" aria-label="Remove"><svg><use href="#s-x"/></svg></button>
                        <button type="button" aria-label="Select all"><svg><use href="#s-select"/></svg></button>
                        <button type="button" aria-label="Insert text"><svg><use href="#s-insert"/></svg></button>
                        <button type="button" aria-label="Find text"><svg><use href="#s-find"/></svg></button>
                        <button type="button" aria-label="Lock"><svg><use href="#s-lock"/></svg></button>
                        <i></i>
                        <button type="button" aria-label="Store"><svg><use href="#s-store"/></svg></button>
                        <button type="button" aria-label="Previous"><svg><use href="#s-hat"/></svg></button>
                        <i></i>
                        <button type="button" aria-label="Windows"><svg><use href="#s-windows"/></svg></button>
                    </div>
                    <div class="diag-body">
                        <div class="statements">
                            <p><span>Normal sinus rhythm</span></p>
                            <p><span>Left axis deviation</span></p>
                            <p><span>Nonspecific T wave abnormality</span></p>
                            <p><span>Abnormal ECG</span></p>
                            <p><span class="cmp">When compared with ECG of</span></p>
                            <p class="indent"><span class="cmp"><a href="#">07-MAR-2007 16:26,</a> (Unconfirmed)</span></p>
                            <p><span class="cmp">No significant change was found</span></p>
                        </div>
                        <div class="scrollbar">
                            <button class="up" type="button" aria-label="Scroll up"></button>
                            <div class="thumb"></div>
                            <button class="down" type="button" aria-label="Scroll down"></button>
                        </div>
                    </div>
                </div>
            </div>

            <div class="strip current">
                <svg class="ecg" viewBox="0 0 765 252" data-grid="pink" data-first="41,101,161"></svg>
            </div>

            <div class="tabs">
                <button class="tab active" type="button"><svg><use href="#s-ecg"/></svg>1:a tidigare: 07-mar-2007 16:26:10</button>
                <button class="tab" type="button"><svg><use href="#s-ecg"/></svg>Mer: 31-jan-2007 16:24:59</button>
                <button class="tab" type="button"><svg><use href="#s-ecg"/></svg>Äldsta: 18-sep-2006 13:55:29</button>
            </div>
            <div class="strip previous">
                <svg class="ecg" viewBox="0 0 765 252" data-grid="blue" data-first="10.5,63,115.5,168"></svg>
            </div>
        </div>
    </main>

    <footer class="status">
        <span class="st-user">Användare: 20001</span>
        <span class="st-site">Plats: 1</span>
        <span class="st-review">Ingen granskare</span>
        <span class="st-patient">Patient: TEST DEMO 000000</span>
        <span class="st-test">Test: Newly Acquired ECG 03-maj-2007 11:16:41</span>
        <span class="st-list">Redigeringslista: #1 av1</span>
        <span>LPF: ofiltrerad</span>
    </footer>

    <div class="taskbar">
        <button class="start" type="button"><svg><use href="#s-flag"/></svg>Start</button>
        <div class="quick">
            <svg><use href="#s-outlook"/></svg>
            <svg><use href="#s-ie"/></svg>
            <svg><use href="#s-search"/></svg>
            <svg><use href="#s-cmd"/></svg>
            <svg><use href="#s-gears"/></svg>
            <svg><use href="#s-app"/></svg>
            <svg><use href="#s-book"/></svg>
            <svg><use href="#s-pdf"/></svg>
        </div>
        <div class="windows">
            <button class="task" type="button"><svg><use href="#s-app"/></svg>MUSE® System - Redi...</button>
        </div>
        <div class="lang"><span>DE</span></div>
        <div class="tray">
            <svg><use href="#s-net"/></svg>
            <svg><use href="#s-net"/></svg>
            <svg><use href="#s-eject"/></svg>
            <svg><use href="#s-vm"/></svg>
            <time>2:47 PM</time>
        </div>
    </div>
</div>

<script src="script.js"></script>
</body>
</html>
```

FILE: styles.css
```css
* {
    box-sizing: border-box;
}
body {
    margin: 0;
    font-family: "Liberation Sans", Arial, sans-serif;
    font-size: 11px;
    color: #000;
    background: #b9c1dc;
}
button, input, select {
    font: inherit;
    color: inherit;
    margin: 0;
    padding: 0;
    border: 0;
}
.defs {
    position: absolute;
    width: 0;
    height: 0;
}
.icon-num {
    font: bold 11px "Liberation Sans", sans-serif;
}
.app {
    display: flex;
    flex-direction: column;
    min-height: 100vh;
}

/* Title and menu */
.title-bar {
    display: flex;
    align-items: center;
    height: 20px;
    padding: 0 3px 0 2px;
    background: #2f3d70;
    border-top: 1px solid #6b78aa;
    border-bottom: 1px solid #0c1030;
}
.app-icon {
    width: 16px;
    height: 16px;
}
.title-bar h1 {
    flex: 1;
    margin: 0 0 0 5px;
    font-size: 11px;
    color: #fff;
    white-space: nowrap;
    overflow: hidden;
}
.window-buttons {
    display: flex;
    gap: 4px;
}
.window-buttons button {
    width: 15px;
    height: 15px;
    background: #a4aed0;
    border: 1px solid #dde2f2;
    border-right-color: #6773a4;
    border-bottom-color: #6773a4;
    border-radius: 4px;
}
.window-buttons svg {
    display: block;
    width: 13px;
    height: 13px;
}
.menu {
    display: flex;
    gap: 10px;
    height: 19px;
    padding-left: 4px;
}
.menu button {
    background: none;
    font-weight: bold;
}

/* Sidebar */
main {
    display: flex;
    flex: 1;
}
.sidebar {
    display: flex;
    flex-direction: column;
    gap: 13px;
    width: 247px;
    padding: 0 3px;
    border-right: 1px solid #6b7bb0;
}
.sidebar h2 {
    margin: 0;
    height: 20px;
    line-height: 21px;
    font-size: 12px;
    font-weight: normal;
    text-align: center;
    color: #e8ebf8;
    background: #6a75a3;
}
.tools {
    display: flex;
    flex-wrap: wrap;
}
.tool, .split {
    width: 48px;
    height: 40px;
    background: #8f9ac2;
    border-right: 1px solid #000;
    border-bottom: 1px solid #000;
    box-shadow: inset 1px 1px #c3cae4, inset -1px -1px #46527f;
}
.tool svg, .split svg {
    display: block;
    width: 48px;
    height: 40px;
}
.split {
    display: flex;
    width: 64px;
}
.split button {
    width: 48px;
    background: none;
}
.split .more {
    width: 14px;
    border-left: 1px solid #46527f;
    box-shadow: inset 1px 0 #b0b9da;
}
.more::after, .drop::after, .scrollbar button::after {
    content: "";
    display: block;
    width: 0;
    margin: auto;
    border: 4px solid transparent;
    border-top-color: #000;
    border-bottom-width: 0;
}
.more:disabled::after {
    border-top-color: #666;
}

/* Patient fields */
.content {
    flex: 1;
    min-width: 0;
    margin-left: 1px;
}
.record {
    display: flex;
    height: 138px;
    border-top: 1px solid #6b7bb0;
}
.fields {
    flex: 1;
    padding-top: 2px;
}
.row {
    display: flex;
    align-items: center;
    height: 22px;
    white-space: nowrap;
}
.lead {
    width: 87px;
    margin-right: 4px;
    text-align: right;
}
.lead-name {
    width: 109px;
}
.lead-sex {
    width: 53px;
}
.lead-size {
    width: 121px;
}
.inner {
    margin: 0 5px 0 9px;
}
.row input, .select, .adt {
    height: 20px;
    padding-left: 2px;
    background: #e4e6f2;
    border: 1px solid #f0f2fa;
    border-top-color: #7380b2;
    border-left-color: #7380b2;
    border-radius: 5px;
}
.row input.computed {
    background: #b9c1dc;
}
.row .w-id {
    width: 108px;
}
.w-long {
    width: 128px;
}
.w-first {
    width: 75px;
    margin-right: 2px;
}
.comma {
    width: 10px;
    padding-left: 3px;
}
.row .w-num {
    width: 32px;
    margin-right: 2px;
}
.select {
    position: relative;
    display: flex;
    padding: 0;
    border-radius: 4px 0 0 0;
    overflow: hidden;
}
.select select {
    flex: 1;
    min-width: 0;
    padding-left: 2px;
    background: none;
    appearance: none;
}
.select::after {
    content: "";
    width: 18px;
    border-left: 1px solid #c3cae4;
    background: #8390bd;
}
.select::before {
    content: "";
    position: absolute;
    right: 3px;
    top: 6px;
    border: 6px solid transparent;
    border-top: 7px solid #000;
    border-bottom: 0;
}
.w-sex {
    width: 71px;
}
.row .w-race {
    width: 114px;
    background: #cdd8f8;
}
.w-unit {
    width: 144px;
}
.drop {
    width: 20px;
    height: 20px;
    background: #8f9ac2;
    border-right: 1px solid #000;
    border-bottom: 1px solid #000;
    box-shadow: inset 1px 1px #c3cae4;
}
.drop::after {
    border-width: 6px 5px 0;
}
.age {
    width: 125px;
    height: 20px;
    font-weight: bold;
    background: #8f9ac2;
    border: 1px solid #46527f;
    border-radius: 5px;
}
.vital-label {
    margin: 0 5px 0 auto;
}
.vitals {
    display: flex;
    align-items: center;
    gap: 2px;
    width: 119px;
}
.vitals input {
    width: 32px;
}
.vitals span {
    padding-left: 3px;
}
.adt {
    flex: 1;
    margin: 0 4px 0 5px;
    line-height: 21px;
    font-size: 13px;
    font-weight: bold;
    text-align: center;
    color: #c06a00;
}

/* Interpretation */
.diagnosis {
    display: flex;
    flex-direction: column;
    width: 266px;
    height: 131px;
    margin-top: 3px;
    border: 1px solid #000;
    background: #e4e6f2;
}
.diag-tools {
    display: flex;
    height: 21px;
    background: #b9c1dc;
    border-bottom: 1px solid #6b7bb0;
}
.diag-tools button {
    width: 20px;
    height: 20px;
    background: #8f9ac2;
    border-right: 1px solid #000;
    border-bottom: 1px solid #000;
    box-shadow: inset 1px 1px #c3cae4;
}
.diag-tools svg {
    display: block;
    width: 18px;
    height: 18px;
}
.diag-tools i {
    width: 1px;
    margin: 2px;
    background: #6b7bb0;
}
.diag-body {
    display: flex;
    flex: 1;
    padding-top: 2px;
}
.statements {
    flex: 1;
    padding-left: 6px;
    font-size: 12px;
    line-height: 15px;
}
.statements p {
    margin: 0;
    height: 15px;
}
.statements .indent {
    padding-left: 20px;
}
.statements span {
    display: inline-block;
    height: 15px;
    padding-right: 2px;
    background: #c0c0c0;
}
.statements .cmp {
    text-decoration: underline;
}
.statements a {
    color: #0000f0;
}
.scrollbar {
    display: flex;
    flex-direction: column;
    width: 16px;
    margin-right: 1px;
    background: #c5cce4;
}
.scrollbar button {
    height: 16px;
    background: #8f9ac2;
    border: 1px solid #46527f;
    box-shadow: inset 1px 1px #c3cae4;
}
.scrollbar button::after {
    border-width: 6px 5px 0;
}
.scrollbar .up::after {
    border-width: 0 5px 6px;
    border-bottom-color: #000;
    border-top-color: transparent;
}
.thumb {
    height: 66px;
    border: 1px solid #46527f;
    background: repeating-linear-gradient(#8f9ac2 0 2px, #7d89b6 2px 4px);
}
.scrollbar .down {
    margin-top: auto;
}

/* ECG strips */
.strip {
    background: #f0f2f8;
    padding: 0 8px;
}
.ecg {
    display: block;
    width: 100%;
    height: auto;
}
.ecg text {
    font: 10px "Liberation Sans", sans-serif;
}
.ecg .trace {
    fill: none;
    stroke: #000;
    stroke-width: 1px;
    stroke-linejoin: bevel;
}
.current {
    margin: 0 5px 0 3px;
}
.previous {
    margin-left: 1px;
    padding: 6px 10px 7px 8px;
    border: 3px solid #b9c1dc;
    border-top: 1px solid #dde2f2;
}
.tabs {
    display: flex;
    align-items: flex-end;
    gap: 2px;
    height: 20px;
    margin-top: 1px;
    background: #6a75a3;
}
.tab {
    display: flex;
    align-items: center;
    height: 17px;
    padding: 0 14px 0 7px;
    font-weight: bold;
    background: #8f9ac2;
    border-top: 1px solid #c9d0e8;
    border-left: 1px solid #c9d0e8;
    border-radius: 5px 0 0 0;
    clip-path: polygon(0 0, calc(100% - 7px) 0, 100% 100%, 0 100%);
}
.tab svg {
    width: 14px;
    height: 14px;
    margin-right: 12px;
}
.tab.active {
    height: 20px;
    margin-left: 1px;
    padding-right: 15px;
    background: #b9c1dc;
}
.tab.active svg {
    margin-right: 16px;
}

/* Status line */
.status {
    display: flex;
    height: 18px;
    line-height: 18px;
    color: #e4e8f6;
    background: #6a75a3;
    border-top: 1px solid #3f4b7c;
    white-space: nowrap;
}
.status span {
    padding-left: 2px;
    border-left: 1px solid #9aa4cc;
}
.status .st-user {
    width: 104px;
    padding-left: 1px;
    border-left: 0;
}
.st-site {
    width: 51px;
}
.st-review {
    width: 93px;
}
.st-patient {
    width: 158px;
}
.st-test {
    width: 255px;
}
.st-list {
    width: 131px;
}

/* Taskbar */
.taskbar {
    display: flex;
    align-items: center;
    height: 30px;
    padding: 0 2px;
    background: #d4d0c8;
    border-top: 2px solid #f4f3f0;
}
.taskbar svg {
    width: 16px;
    height: 16px;
}
.start, .task {
    display: flex;
    align-items: center;
    height: 22px;
    font-weight: bold;
    background: #d4d0c8;
    border: 1px solid #fff;
    border-right-color: #404040;
    border-bottom-color: #404040;
}
.start {
    gap: 2px;
    width: 52px;
    padding-left: 1px;
    font-size: 12px;
}
.quick, .windows, .lang {
    display: flex;
    align-items: center;
    height: 22px;
    border-left: 1px solid #fff;
    box-shadow: -1px 0 #808080;
}
.quick {
    gap: 7px;
    margin-left: 9px;
    padding-left: 7px;
    width: 210px;
}
.windows {
    flex: 1;
    padding-left: 4px;
}
.task {
    gap: 4px;
    width: 160px;
    padding-left: 3px;
    background: #eeece8;
    border-color: #404040 #fff #fff #404040;
}
.lang {
    padding: 0 3px 0 8px;
}
.lang span {
    width: 15px;
    line-height: 16px;
    font-size: 10px;
    text-align: center;
    color: #fff;
    background: #6a75a3;
}
.tray {
    display: flex;
    align-items: center;
    gap: 2px;
    width: 134px;
    height: 22px;
    padding-left: 2px;
    border: 1px solid #808080;
    border-right-color: #fff;
    border-bottom-color: #fff;
}
.tray time {
    margin-left: auto;
    padding-right: 11px;
}
```

FILE: script.js
```js
// One beat per lead: [offset from the R peak, deflection], in thirds of a pixel
const beats = {
    I: [[-48,2],[-44,3],[-38,-6],[-33,-13],[-27,5],[-9,6],[-6,19],[0,-81],[4,-20],[7,-4],[12,-1],[60,-1]],
    II: [[-60,1],[-50,0],[-38,-4],[-32,-2],[-27,7],[-8,8],[-3,-4],[3,39],[10,5],[20,3],[60,2]],
    III: [[-60,0],[-47,-4],[-32,9],[-24,4],[-11,4],[-7,-9],[2,91],[8,20],[14,7],[40,6],[70,2]],
    aVR: [[-60,0],[-50,1],[-40,8],[-34,7],[-26,-4],[-10,-5],[-5,-11],[1,42],[5,-9],[10,-1],[60,0]],
    aVL: [[-60,0],[-45,4],[-32,-10],[-24,1],[-10,3],[-5,15],[0,-81],[7,-20],[13,-3],[60,0]],
    aVF: [[-60,0],[-45,-2],[-30,6],[-12,7],[-5,-2],[3,66],[10,12],[18,5],[50,3]],
    V1: [[-60,1],[-50,1],[-42,9],[-36,12],[-28,5],[-12,3],[-7,-9],[-3,4],[2,67],[6,5],[10,-4],[24,-8],[37,-20],[46,-28],[52,-30],[60,-26],[70,-6],[78,2]],
    V2: [[-70,-1],[-50,1],[-38,6],[-14,8],[-8,4],[-2,-89],[3,79],[8,10],[14,-7],[26,-16],[36,-33],[46,-72],[52,-82],[57,-78],[66,-30],[73,-8]],
    V3: [[-70,0],[-34,0],[-27,7],[-12,7],[-6,-20],[-2,-122],[4,103],[9,15],[15,0],[26,-14],[38,-40],[45,-51],[50,-53],[57,-47],[66,-18],[75,-3]],
    V4: [[-60,0],[-35,-2],[-23,7],[-9,6],[-5,-20],[-1,-125],[5,82],[10,10],[18,-5],[32,-13],[48,-19],[56,-17],[65,-3],[78,0]],
    V5: [[-70,1],[-45,1],[-33,-3],[-25,5],[-8,6],[-5,-10],[-1,-97],[4,47],[9,12],[16,4],[28,-3],[38,-5],[50,0],[58,11],[70,3]],
    V6: [[-60,2],[-30,0],[-20,5],[-7,6],[-2,-64],[4,18],[12,9],[38,9],[50,12],[58,18],[68,8],[75,5]]
};

const rows = [["I", "aVR", "V1", "V4"], ["II", "aVL", "V2", "V5"], ["III", "aVF", "V3", "V6"]];
const edges = [15, 203, 391, 579, 765];

function beatTimes(first) {
    const times = first.split(",").map(Number);
    while (times[times.length - 1] < 780) {
        times.push(times[times.length - 1] + 52.5);
    }
    return times;
}

// Draws one lead between two x positions
function segment(name, times, from, to, base) {
    const points = [];
    times.forEach((t, i) => {
        beats[name].forEach(([dx, dy]) => {
            if (i > 0 || dx > -30) {
                points.push((t + dx / 3 - from).toFixed(1) + "," + (base + dy / 3).toFixed(1));
            }
        });
    });
    if (times[0] > from) {
        points.unshift("0," + base, "14," + base);
    }
    return `<svg x="${from}" width="${to - from}" height="252"><polyline class="trace" points="${points.join(" ")}"/></svg>`;
}

document.querySelectorAll(".ecg").forEach(svg => {
    const grid = svg.dataset.grid;
    const times = beatTimes(svg.dataset.first);
    const paper = grid === "pink" ? "#fbeff4" : "#eff2fb";
    let html = `<rect width="765" height="252" fill="${paper}"/>
        <rect width="765" height="252" fill="url(#minor-${grid})"/>
        <rect width="765" height="252" fill="url(#major-${grid})"/>`;

    // Calibration pulses
    for (let r = 0; r < 4; r++) {
        const y = 42.5 + r * 63;
        html += `<path class="trace" d="M.5 ${y}v-30h15v30"/>`;
    }
    rows.forEach((row, r) => {
        const base = 42.5 + r * 63;
        row.forEach((name, c) => {
            html += segment(name, times, edges[c], edges[c + 1], base);
            html += `<text x="${c ? edges[c] : 17}" y="${base + 19}">${name}</text>`;
            if (c) {
                html += `<path class="trace" d="M${edges[c] - .5} ${base - 7.5}v15"/>`;
            }
        });
    });
    html += segment("II", times, 15, 765, 231.5);
    html += `<text x="20" y="250.5">II</text>`;
    svg.innerHTML = html;
});
```
